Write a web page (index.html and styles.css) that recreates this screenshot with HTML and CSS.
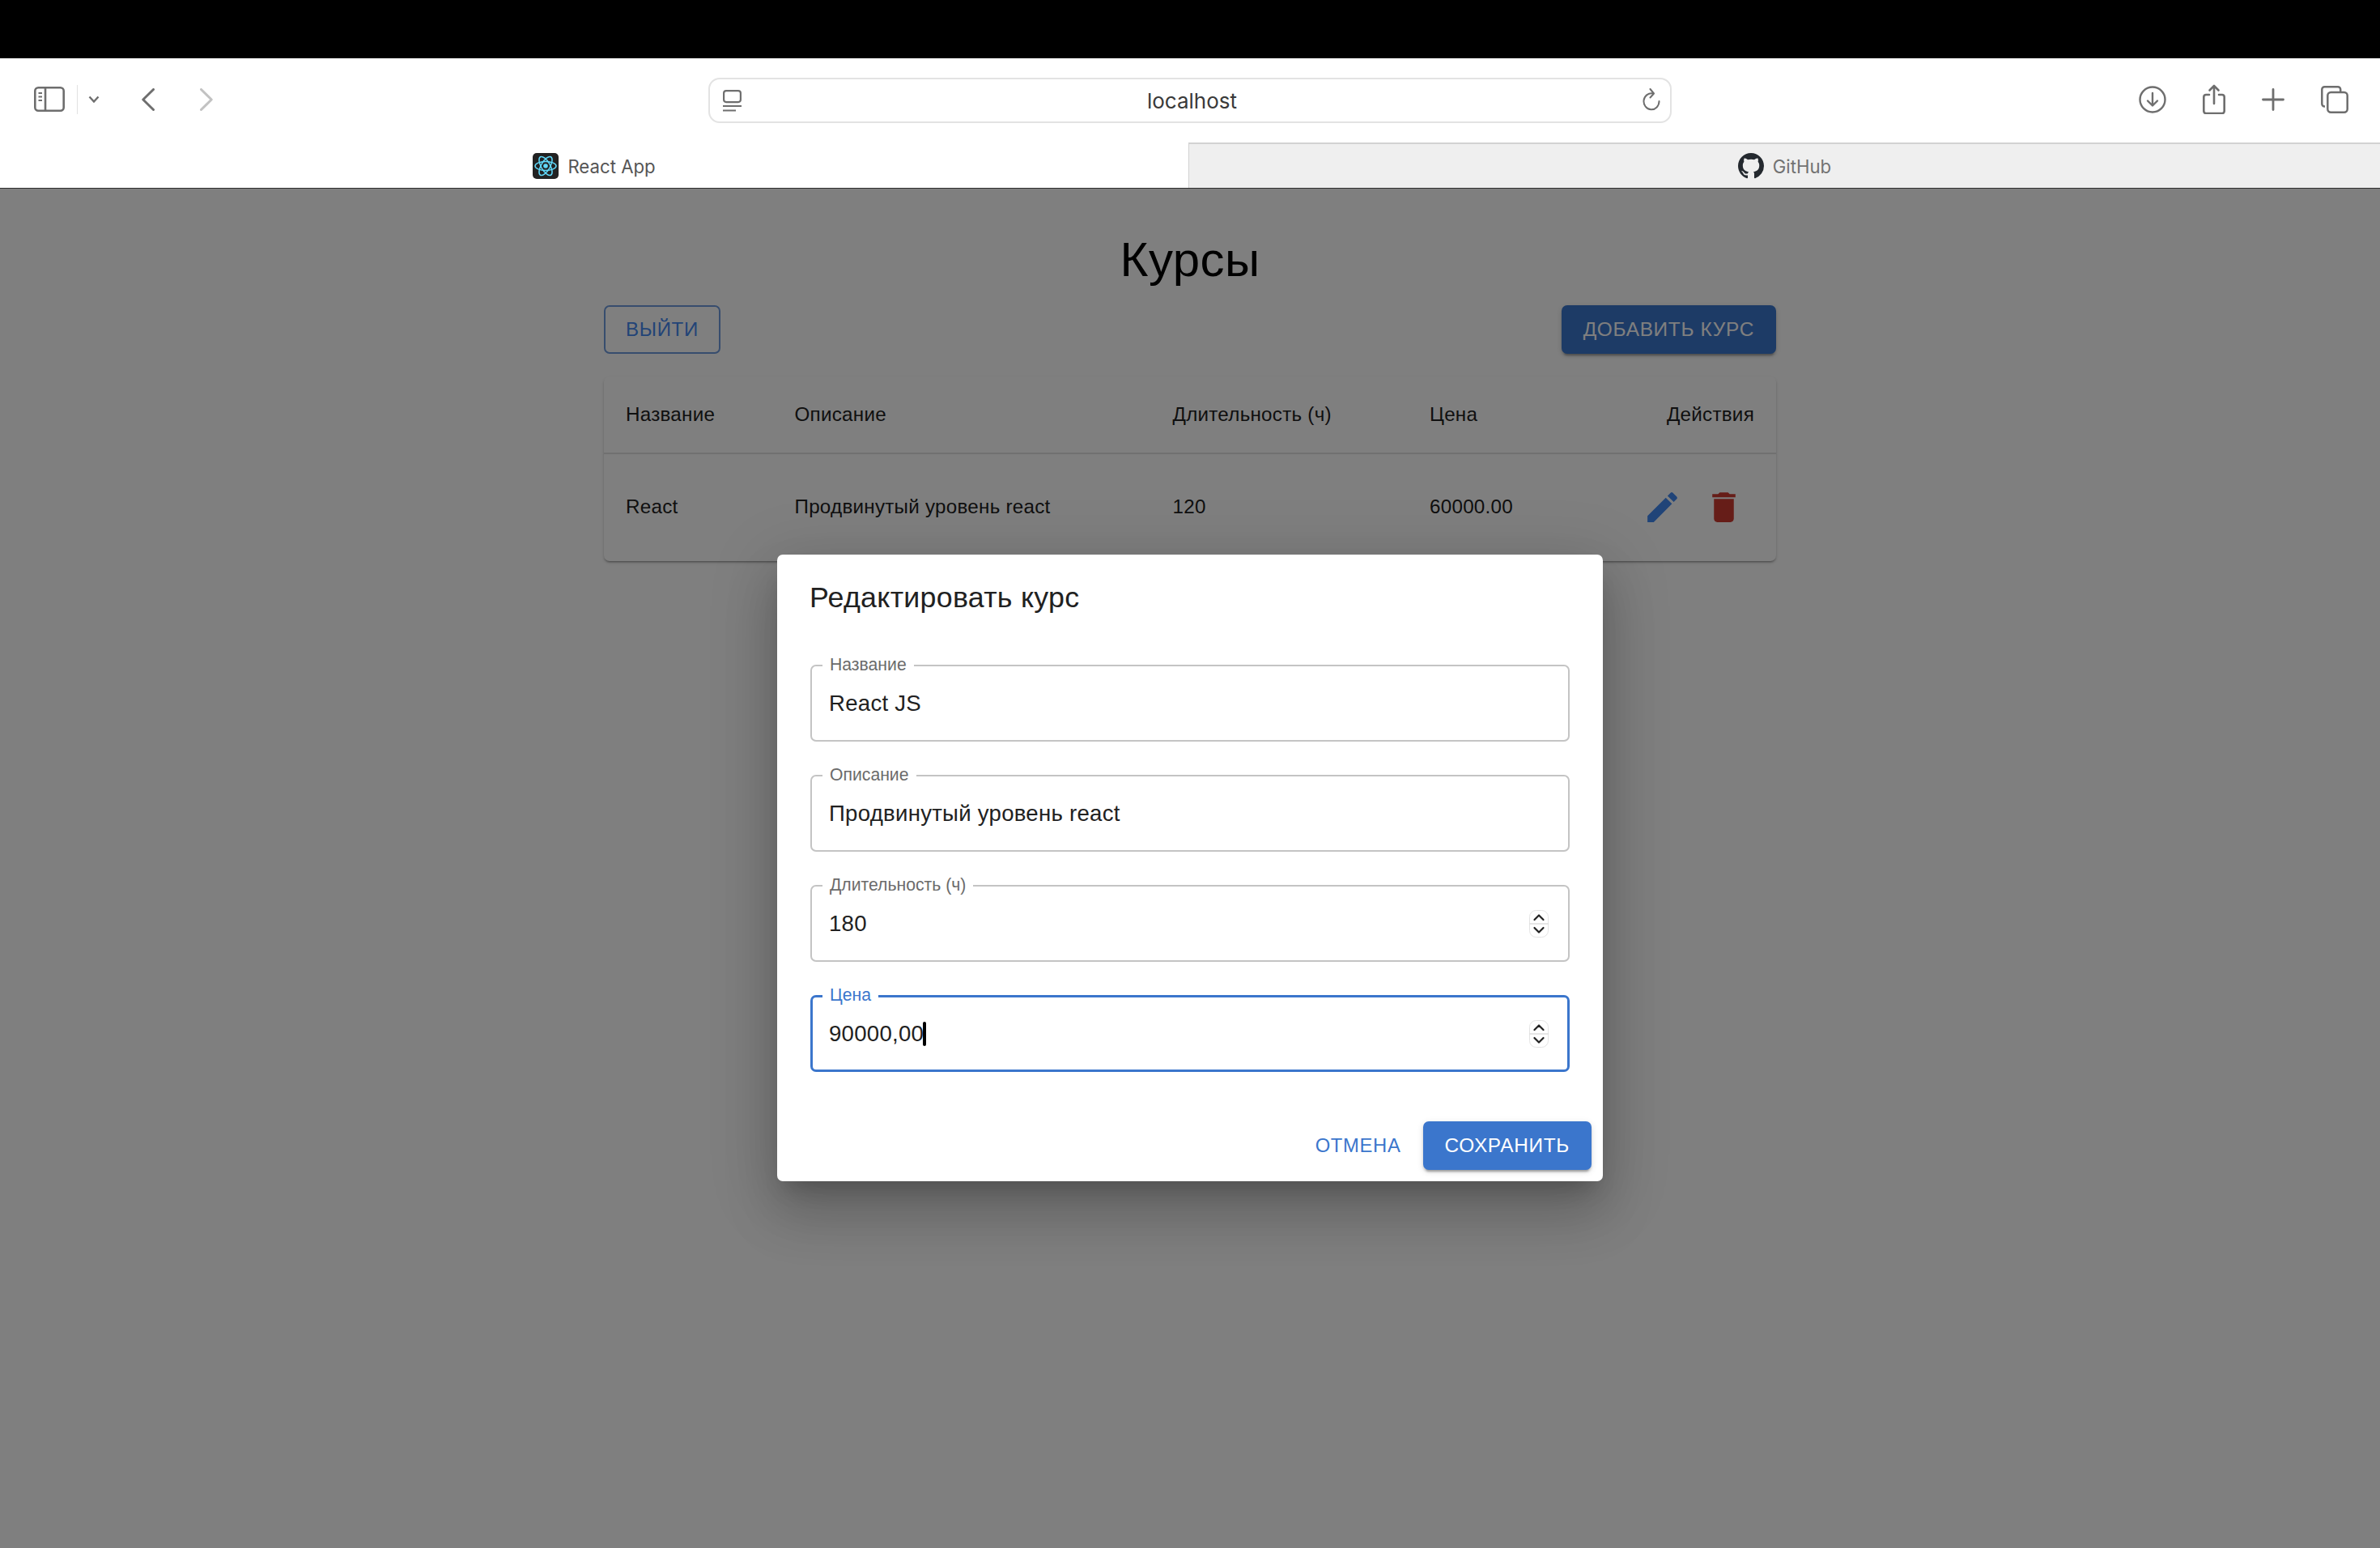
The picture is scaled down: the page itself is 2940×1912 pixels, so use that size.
FILE: index.html
```html
<!DOCTYPE html>
<html lang="en">
<head>
  <meta charset="UTF-8">
  <title>React App</title>
  <link rel="stylesheet" href="styles.css">
</head>
<body>
  <div class="top-strip"></div>

  <!-- browser toolbar -->
  <div class="toolbar">
    <div class="toolbar-left">
      <svg class="icon-sidebar" viewBox="0 0 38 31" fill="none" stroke="#6e6e6e" stroke-width="2.6">
        <rect x="1.3" y="1.3" width="35.4" height="28.4" rx="4"/>
        <path d="M14 1.3v28.4"/>
        <path d="M5.5 8h4.500M5.500 12.500h4.500M5.500 17h4.500" stroke-width="2"/>
      </svg>
      <span class="toolbar-divider"></span>
      <svg class="icon-caret" viewBox="0 0 14 9" fill="none" stroke="#6e6e6e" stroke-width="2.4">
        <path d="M1.500 1.500 7 7.500l5.500-6"/>
      </svg>
      <svg class="icon-back" viewBox="0 0 16 28" fill="none" stroke="#6e6e6e" stroke-width="3" stroke-linecap="round" stroke-linejoin="round">
        <path d="M14.500 1.500 1.800 14l12.700 12.500"/>
      </svg>
      <svg class="icon-forward" viewBox="0 0 16 28" fill="none" stroke="#c2c2c2" stroke-width="3" stroke-linecap="round" stroke-linejoin="round">
        <path d="M1.500 1.500 14.200 14 1.500 26.500"/>
      </svg>
    </div>

    <div class="address-bar">
      <svg class="icon-reader" viewBox="0 0 23 27" fill="none" stroke="#6e6e6e" stroke-width="2.2">
        <rect x="1.100" y="1.100" width="20.800" height="14" rx="3"/>
        <path d="M0 20h23M0 25.500h16"/>
      </svg>
      <span class="address-text">localhost</span>
      <svg class="icon-reload" viewBox="0 0 22 30" fill="none" stroke="#6e6e6e" stroke-width="2" stroke-linecap="round" stroke-linejoin="round">
        <path d="M13 6.500A9.500 10 0 1 0 20.500 16"/>
        <path d="M9.500 1 14 6.500 9.500 11.500"/>
      </svg>
    </div>

    <div class="toolbar-right">
      <svg class="icon-download" viewBox="0 0 34 34" fill="none" stroke="#6e6e6e" stroke-width="2.4" stroke-linecap="round" stroke-linejoin="round">
        <circle cx="17" cy="17" r="15.500"/>
        <path d="M17 9v15M11 18.500l6 6 6-6"/>
      </svg>
      <svg class="icon-share" viewBox="0 0 28 37" fill="none" stroke="#6e6e6e" stroke-width="2.600" stroke-linecap="round" stroke-linejoin="round">
        <path d="M8 13H4a2.700 2.700 0 0 0-2.700 2.700v17.600A2.700 2.700 0 0 0 4 36h20a2.700 2.700 0 0 0 2.700-2.700V15.700A2.700 2.700 0 0 0 24 13h-4"/>
        <path d="M14 24V2M8.500 7.500 14 2l5.500 5.500"/>
      </svg>
      <svg class="icon-plus" viewBox="0 0 28 28" fill="none" stroke="#6e6e6e" stroke-width="2.800" stroke-linecap="round">
        <path d="M14 1.500v25M1.500 14h25"/>
      </svg>
      <svg class="icon-tabs" viewBox="0 0 34 34" fill="none" stroke="#6e6e6e" stroke-width="2.500">
        <path d="M5 25.500H4.500a3.200 3.200 0 0 1-3.200-3.200V4.500a3.200 3.200 0 0 1 3.200-3.200H21a3.200 3.200 0 0 1 3.200 3.200V8"/>
        <rect x="8.300" y="8" width="24.400" height="24.700" rx="4"/>
      </svg>
    </div>
  </div>

  <!-- browser tabs -->
  <div class="tabs">
    <div class="tab tab-active">
      <svg class="favicon" viewBox="0 0 32 32">
        <rect width="32" height="32" rx="5" fill="#222"/>
        <g fill="none" stroke="#61dafb" stroke-width="1.500">
          <ellipse cx="16" cy="16" rx="13" ry="5.500"/>
          <ellipse cx="16" cy="16" rx="13" ry="5.500" transform="rotate(60 16 16)"/>
          <ellipse cx="16" cy="16" rx="13" ry="5.500" transform="rotate(120 16 16)"/>
        </g>
        <circle cx="16" cy="16" r="2.800" fill="#61dafb"/>
      </svg>
      <span>React App</span>
    </div>
    <div class="tab tab-inactive">
      <svg class="favicon" viewBox="0 0 16 16">
        <path fill="#24292f" d="M8 0C3.580 0 0 3.580 0 8c0 3.540 2.290 6.530 5.470 7.590.4.070.55-.17.55-.38 0-.19-.01-.82-.01-1.490-2.010.37-2.530-.49-2.690-.94-.09-.23-.48-.94-.82-1.130-.28-.15-.68-.52-.01-.53.63-.01 1.080.58 1.230.82.72 1.210 1.870.87 2.330.66.07-.52.28-.87.51-1.070-1.780-.2-3.640-.89-3.640-3.950 0-.87.31-1.590.82-2.150-.08-.2-.36-1.020.08-2.120 0 0 .67-.21 2.200.82.64-.18 1.320-.27 2-.27.68 0 1.360.09 2 .27 1.530-1.040 2.200-.82 2.200-.82.44 1.100.16 1.920.08 2.120.51.56.82 1.270.82 2.150 0 3.070-1.870 3.750-3.650 3.950.29.25.54.73.54 1.480 0 1.070-.01 1.930-.01 2.200 0 .21.15.46.55.38A8.013 8.013 0 0016 8c0-4.420-3.580-8-8-8z"/>
      </svg>
      <span>GitHub</span>
    </div>
  </div>

  <div class="viewport">
    <div class="page">
      <h1>Курсы</h1>
      <div class="page-actions">
        <button class="btn btn-outlined" type="button">Выйти</button>
        <button class="btn btn-contained" type="button">Добавить курс</button>
      </div>

      <div class="table-paper">
        <table>
          <colgroup>
            <col class="col-name">
            <col class="col-desc">
            <col class="col-hours">
            <col class="col-price">
            <col class="col-actions">
          </colgroup>
          <thead>
            <tr>
              <th>Название</th>
              <th>Описание</th>
              <th>Длительность (ч)</th>
              <th>Цена</th>
              <th class="cell-right">Действия</th>
            </tr>
          </thead>
          <tbody>
            <tr>
              <td>React</td>
              <td>Продвинутый уровень react</td>
              <td>120</td>
              <td>60000.00</td>
              <td class="cell-right">
                <div class="row-actions">
                  <span class="icon-btn">
                    <svg viewBox="0 0 24 24" fill="#4188f0"><path d="M3 17.250V21h3.750L17.810 9.940l-3.750-3.750L3 17.250zM20.710 7.040c.39-.39.39-1.020 0-1.410l-2.340-2.340a.9959.9959 0 0 0-1.410 0l-1.830 1.830 3.750 3.750 1.830-1.830z"/></svg>
                  </span>
                  <span class="icon-btn">
                    <svg viewBox="0 0 24 24" fill="#cc3a30"><path d="M6 19c0 1.100.9 2 2 2h8c1.100 0 2-.9 2-2V7H6v12zM19 4h-3.500l-1-1h-5l-1 1H5v2h14V4z"/></svg>
                  </span>
                </div>
              </td>
            </tr>
          </tbody>
        </table>
      </div>
    </div>

    <!-- edit dialog -->
    <div class="overlay">
      <div class="dialog">
        <h2 class="dialog-title">Редактировать курс</h2>
        <div class="dialog-content">
          <div class="field">
            <span class="field-label">Название</span>
            <span class="field-value">React JS</span>
          </div>
          <div class="field">
            <span class="field-label">Описание</span>
            <span class="field-value">Продвинутый уровень react</span>
          </div>
          <div class="field">
            <span class="field-label">Длительность (ч)</span>
            <span class="field-value">180</span>
            <svg class="spinner" viewBox="0 0 24 34" fill="none">
              <rect x=".5" y=".5" width="23" height="33" rx="8" fill="#fff" stroke="#e4e4e4"/>
              <path d="M0 17h24" stroke="#dedede" stroke-width="1.500"/>
              <path d="M6.500 12 12 6.500l5.500 5.500M6.500 22l5.500 5.500 5.500-5.500" stroke="#222" stroke-width="2.200" stroke-linecap="round" stroke-linejoin="round"/>
            </svg>
          </div>
          <div class="field field-focused">
            <span class="field-label">Цена</span>
            <span class="field-value">90000,00<span class="caret"></span></span>
            <svg class="spinner" viewBox="0 0 24 34" fill="none">
              <rect x=".5" y=".5" width="23" height="33" rx="8" fill="#fff" stroke="#e4e4e4"/>
              <path d="M0 17h24" stroke="#dedede" stroke-width="1.500"/>
              <path d="M6.500 12 12 6.500l5.500 5.500M6.500 22l5.500 5.500 5.500-5.500" stroke="#222" stroke-width="2.200" stroke-linecap="round" stroke-linejoin="round"/>
            </svg>
          </div>
        </div>
        <div class="dialog-actions">
          <button class="btn btn-text" type="button">Отмена</button>
          <button class="btn btn-contained" type="button">Сохранить</button>
        </div>
      </div>
    </div>
  </div>
</body>
</html>
```

FILE: styles.css
```css
* {
  box-sizing: border-box;
}
body {
  margin: 0;
  height: 1912px;
  overflow: hidden;
  background: #fff;
  font-family: "Liberation Sans", Arial, sans-serif;
  color: #212121;
}

/* browser chrome */
.top-strip {
  height: 72px;
  background: #000;
}
.toolbar {
  height: 104px;
  display: grid;
  grid-template-columns: 875px 1190px 1fr;
  align-items: center;
  background: #fff;
}
.toolbar svg {
  display: block;
  flex: none;
}
.toolbar-left {
  display: flex;
  align-items: center;
  padding-left: 42px;
  margin-bottom: 3px;
}
.icon-sidebar {
  width: 38px;
  height: 31px;
}
.toolbar-divider {
  width: 1px;
  height: 36px;
  margin-left: 15px;
  background: #e2e2e2;
}
.icon-caret {
  width: 14px;
  height: 9px;
  margin-left: 13px;
}
.icon-back,
.icon-forward {
  width: 16px;
  height: 28px;
}
.icon-back {
  margin-left: 52px;
}
.icon-forward {
  margin-left: 56px;
}
.address-bar {
  height: 56px;
  display: flex;
  align-items: center;
  justify-content: space-between;
  padding: 0 12px 0 16px;
  border: 2px solid #e3e3e3;
  border-radius: 14px;
}
.address-text {
  font-family: Inter, "Liberation Sans", sans-serif;
  font-size: 26px;
  color: #3a3a3a;
}
.icon-reader {
  width: 23px;
  height: 27px;
}
.icon-reload {
  width: 22px;
  height: 30px;
}
.toolbar-right {
  display: flex;
  align-items: center;
  justify-content: flex-end;
  gap: 45px;
  padding-right: 39px;
  margin-bottom: 3px;
}
.icon-download {
  width: 34px;
  height: 34px;
}
.icon-share {
  width: 28px;
  height: 37px;
}
.icon-plus {
  width: 28px;
  height: 28px;
}
.icon-tabs {
  width: 34px;
  height: 34px;
}

.tabs {
  position: relative;
  z-index: 1;
  height: 56px;
  display: grid;
  grid-template-columns: 1468px 1fr;
  box-shadow: 0 1px 0 #2e2e2e;
}
.tab {
  display: flex;
  align-items: center;
  justify-content: center;
  gap: 11px;
  font-family: Inter, "Liberation Sans", sans-serif;
  font-size: 22.200px;
}
.tab-active {
  padding-top: 2px;
  color: #555;
}
.tab-inactive {
  color: #727272;
  background: #efefef;
  border-top: 2px solid #d2d2d2;
  border-left: 1px solid #d2d2d2;
}
.favicon {
  width: 32px;
  height: 32px;
}

/* app page */
.viewport {
  position: relative;
  height: 1680px;
  overflow: hidden;
}
.page {
  width: 1448px;
  margin: 0 auto;
  padding-top: 53px;
}
h1 {
  margin: 0 0 21px;
  font-size: 60px;
  line-height: 71px;
  font-weight: 400;
  letter-spacing: 0.007em;
  text-align: center;
  color: #000;
}
.page-actions {
  display: flex;
  justify-content: space-between;
}
.btn {
  height: 60px;
  padding: 0 27px;
  border: none;
  border-radius: 7px;
  font-family: "Liberation Sans", Arial, sans-serif;
  font-size: 24.400px;
  letter-spacing: 0.02857em;
  text-transform: uppercase;
  background: none;
}
.btn-outlined {
  color: #4488ee;
  border: 2px solid #6f9bdc;
  padding: 0 25px;
  font-size: 24px;
}
.btn-contained {
  color: #fff;
  background: #3b76cc;
  box-shadow: 0 5px 2px -3px rgba(0,0,0,0.2), 0 3px 3px 0 rgba(0,0,0,0.14), 0 2px 8px 0 rgba(0,0,0,0.12);
}
.btn-text {
  color: #3b76cc;
  font-size: 23.800px;
}

.table-paper {
  margin-top: 28px;
  background: #fff;
  border-radius: 7px;
  box-shadow: 0 3px 2px -2px rgba(0,0,0,0.2), 0 2px 2px 0 rgba(0,0,0,0.14), 0 2px 5px 0 rgba(0,0,0,0.12);
}
table {
  width: 100%;
  border-collapse: collapse;
  table-layout: fixed;
  font-size: 24.200px;
  letter-spacing: 0.01071em;
}
.col-name { width: 208.500px; }
.col-desc { width: 467px; }
.col-hours { width: 317.500px; }
.col-price { width: 240px; }
th,
td {
  padding: 0 27px;
  text-align: left;
  font-weight: 400;
  color: #212121;
}
th {
  height: 95px;
  border-bottom: 2px solid #e0e0e0;
}
td {
  height: 133px;
  padding-bottom: 3px;
}
th.cell-right,
td.cell-right {
  text-align: right;
}
.row-actions {
  display: flex;
  justify-content: flex-end;
  margin-top: 2px;
}
.icon-btn {
  width: 76px;
  height: 76px;
  display: flex;
  align-items: center;
  justify-content: center;
}
.icon-btn svg {
  width: 49px;
  height: 49px;
}

/* dialog */
.overlay {
  position: absolute;
  top: 0;
  left: 0;
  right: 0;
  bottom: 0;
  display: flex;
  align-items: center;
  justify-content: center;
  background: rgba(0,0,0,0.5);
}
.dialog {
  width: 1020px;
  height: 774px;
  display: flex;
  flex-direction: column;
  background: #fff;
  border-radius: 7px;
  box-shadow: 0 19px 26px -12px rgba(0,0,0,0.2), 0 41px 65px 5px rgba(0,0,0,0.14), 0 15px 78px 14px rgba(0,0,0,0.12);
}
.dialog-title {
  margin: 0;
  padding: 26px 40px 28px;
  font-size: 35.800px;
  line-height: 54px;
  font-weight: 400;
  letter-spacing: 0.0075em;
  color: #212121;
}
.dialog-content {
  flex: 1;
  display: flex;
  flex-direction: column;
  gap: 41px;
  padding: 28px 41px 0 41px;
}
.field {
  position: relative;
  height: 95px;
  display: flex;
  align-items: center;
  justify-content: space-between;
  padding: 0 24px 0 21px;
  border: 2px solid #c4c4c4;
  border-radius: 7px;
}
.field-focused {
  padding: 0 23px 0 20px;
  border: 3px solid #3b76cc;
}
.field-label {
  position: absolute;
  top: -14px;
  left: 13px;
  padding: 0 9px;
  background: #fff;
  font-size: 21.200px;
  line-height: 24px;
  color: #6b6b6b;
}
.field-focused .field-label {
  top: -15px;
  left: 12px;
  color: #3b76cc;
}
.field-value {
  font-size: 27.600px;
  letter-spacing: 0.00938em;
  color: #212121;
}
.caret {
  display: inline-block;
  width: 4px;
  height: 30px;
  margin-left: -1px;
  border-radius: 2px;
  background: #000;
  vertical-align: -6px;
}
.spinner {
  width: 24px;
  height: 34px;
}
.dialog-actions {
  display: flex;
  justify-content: flex-end;
  align-items: center;
  gap: 13px;
  padding: 0 14px 14px;
}
.dialog-actions .btn-text {
  padding: 0 14px;
}
```
